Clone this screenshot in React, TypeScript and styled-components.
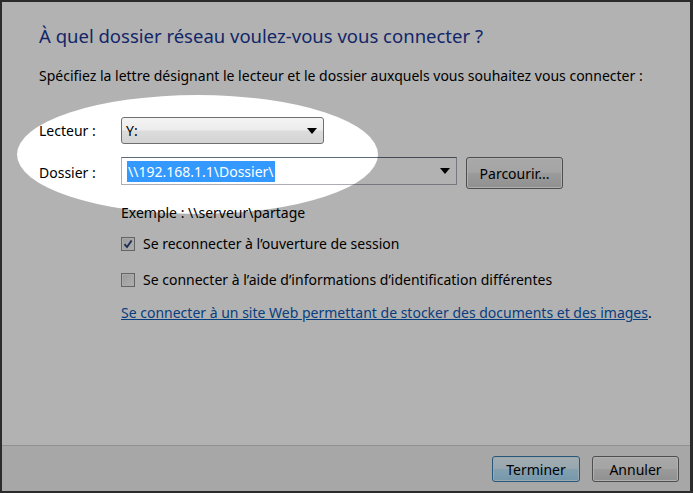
import React from 'react';
import styled, { createGlobalStyle } from 'styled-components';

const GlobalStyle = createGlobalStyle`
  html, body {
    margin: 0;
    padding: 0;
    background: #2a2a2a;
  }
  * {
    box-sizing: border-box;
  }
`;

const Window = styled.div`
  position: relative;
  width: 693px;
  height: 493px;
  border: 2px solid #2b2b2b;
  border-right-width: 3px;
  background: #ffffff;
  overflow: hidden;
  display: flex;
  flex-direction: column;
  font-family: 'Noto Sans', 'Open Sans', sans-serif;
  font-size: 14px;
  color: #000;
`;

const Body = styled.div`
  flex: 1;
  padding: 22px 0 0 37px;
  display: flex;
  flex-direction: column;
`;

const Title = styled.h1`
  margin: 0;
  font-family: 'Noto Sans', sans-serif;
  font-weight: 400;
  font-size: 18.5px;
  line-height: 24px;
  color: #1a3796;
  letter-spacing: 0;
`;

const Intro = styled.p`
  margin: 19px 0 0;
  line-height: 18px;
`;

const Form = styled.div`
  margin-top: 32px;
  display: grid;
  grid-template-columns: 82px auto;
  row-gap: 13px;
  align-items: center;
`;

const Label = styled.span`
  line-height: 18px;
`;

const ComboRow = styled.div`
  display: flex;
  align-items: flex-start;
  gap: 9px;
`;

const DropArrow = styled.span`
  width: 0;
  height: 0;
  border-left: 5px solid transparent;
  border-right: 5px solid transparent;
  border-top: 6px solid #000;
`;

const Select = styled.div`
  width: 203px;
  height: 27px;
  border: 1px solid #6f6f6f;
  border-radius: 3px;
  background: linear-gradient(#f4f4f4 0%, #ececec 48%, #dcdcdc 52%, #d4d4d4 100%);
  display: flex;
  align-items: center;
  justify-content: space-between;
  padding: 0 6px 0 4px;
`;

const Combo = styled.div`
  width: 336px;
  height: 28px;
  border: 1px solid #abadb3;
  border-top-color: #5d6a78;
  background: #fff;
  display: flex;
  align-items: center;
  justify-content: space-between;
  padding: 0 6px 0 5px;
`;

const Selected = styled.span`
  background: #3399ff;
  color: #fff;
  line-height: 21px;
  padding: 0 1px;
  font-size: 14px;
`;

const Button = styled.div<{ $primary?: boolean; $width: number; $height: number }>`
  width: ${p => p.$width}px;
  height: ${p => p.$height}px;
  border: 1px solid ${p => (p.$primary ? '#3c7fb1' : '#707070')};
  border-radius: 3px;
  background: ${p =>
    p.$primary
      ? 'linear-gradient(#eaf6fd 0%, #d9f0fc 48%, #bee6fd 52%, #a7d9f5 100%)'
      : 'linear-gradient(#f2f2f2 0%, #ebebeb 48%, #dddddd 52%, #cfcfcf 100%)'};
  box-shadow: inset 0 0 0 1px ${p => (p.$primary ? '#ddf1fb' : '#fcfcfc')};
  display: flex;
  align-items: center;
  justify-content: center;
  font-size: 14px;
`;

const Options = styled.div`
  margin-left: 82px;
  display: flex;
  flex-direction: column;
`;

const Example = styled.div`
  margin-top: 15px;
  line-height: 18px;
`;

const CheckRow = styled.label<{ $top: number }>`
  margin-top: ${p => p.$top}px;
  display: flex;
  align-items: center;
  gap: 8px;
  line-height: 18px;
`;

const Box = styled.span`
  width: 14px;
  height: 14px;
  border: 1px solid #8e8f8f;
  background: linear-gradient(135deg, #dcdcdc, #fbfbfb);
  box-shadow: inset 0 0 0 1px #f4f4f4;
  display: flex;
  align-items: center;
  justify-content: center;
`;

const Link = styled.div`
  margin-top: 15px;
  line-height: 18px;

  a {
    color: #0a5ab8;
    text-decoration: underline;
  }
`;

const Footer = styled.div`
  height: 46px;
  border-top: 1px solid #cfcfcf;
  background: #f0f0f0;
  display: flex;
  justify-content: flex-end;
  align-items: flex-start;
  gap: 12px;
  padding: 10px 11px 0 0;
`;

// dims the whole dialog, leaving an elliptical spotlight over the drive fields
const Spotlight = styled.div`
  position: absolute;
  left: 15px;
  top: 93px;
  width: 361px;
  height: 119px;
  border-radius: 50%;
  box-shadow: 0 0 0 900px rgba(0, 0, 0, 0.3);
  pointer-events: none;
`;

const Check = () => (
  <svg width="10" height="10" viewBox="0 0 10 10">
    <path d="M1.5 5.2 L4 8 L8.6 1.4" fill="none" stroke="#2a3f7a" strokeWidth="1.8" />
  </svg>
);

export default function App() {
  return (
    <>
      <GlobalStyle />
      <Window>
        <Body>
          <Title>À quel dossier réseau voulez-vous vous connecter ?</Title>
          <Intro>
            Spécifiez la lettre désignant le lecteur et le dossier auxquels vous souhaitez vous connecter :
          </Intro>
          <Form>
            <Label>Lecteur :</Label>
            <Select>
              <span>Y:</span>
              <DropArrow />
            </Select>
            <Label>Dossier :</Label>
            <ComboRow>
              <Combo>
                <Selected>\\192.168.1.1\Dossier\</Selected>
                <DropArrow />
              </Combo>
              <Button $width={97} $height={32}>Parcourir...</Button>
            </ComboRow>
          </Form>
          <Options>
            <Example>Exemple : \\serveur\partage</Example>
            <CheckRow $top={13}>
              <Box>
                <Check />
              </Box>
              Se reconnecter à l’ouverture de session
            </CheckRow>
            <CheckRow $top={18}>
              <Box />
              Se connecter à l’aide d’informations d’identification différentes
            </CheckRow>
            <Link>
              <a href="#">Se connecter à un site Web permettant de stocker des documents et des images</a>.
            </Link>
          </Options>
        </Body>
        <Footer>
          <Button $primary $width={88} $height={26}>Terminer</Button>
          <Button $width={87} $height={26}>Annuler</Button>
        </Footer>
        <Spotlight />
      </Window>
    </>
  );
}
